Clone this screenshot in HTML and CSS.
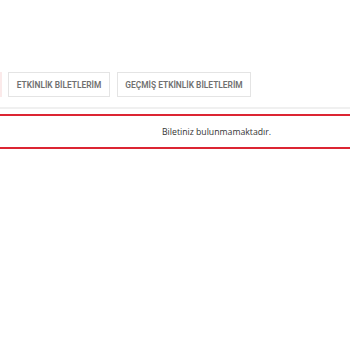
FILE: index.html
```html
<!DOCTYPE html>
<html>
<head>
<meta charset="utf-8">
<link rel="stylesheet" href="styles.css">
</head>
<body>
<div class="page">
  <div class="tabs-area">
    <div class="tabs">
      <div class="tab">ETKİNLİK BİLETLERİM</div>
      <div class="tab">GEÇMİŞ ETKİNLİK BİLETLERİM</div>
    </div>
  </div>
  <div class="divider"></div>
  <div class="notice">
    <p class="notice-text">Biletiniz bulunmamaktadır.</p>
  </div>
</div>
</body>
</html>
```
FILE: styles.css
```css
html, body {
  margin: 0;
  padding: 0;
  background: #fff;
}
.page {
  width: 350px;
  height: 350px;
  padding-top: 72px;
  box-sizing: border-box;
  background: #fff;
}
.tabs-area {
  padding-left: 6px;
  border-left: 2px solid #fbeaea;
}
.tabs {
  display: flex;
  gap: 7px;
}
.tab {
  height: 25px;
  box-sizing: border-box;
  border: 1px solid #e4e4e4;
  display: flex;
  align-items: center;
  justify-content: center;
  font-family: Roboto, "Liberation Sans", sans-serif;
  font-weight: 600;
  font-size: 8.4px;
  color: #707070;
}
.tab:first-child {
  width: 102px;
}
.tab:nth-child(2) {
  width: 134px;
}
.divider {
  margin-top: 10px;
  height: 2px;
  background: #f0f0f0;
}
.notice {
  margin-top: 5px;
  border-top: 2px solid #dc2533;
  border-bottom: 2px solid #dc2533;
  height: 31px;
  display: flex;
  align-items: center;
  padding-left: 162px;
}
.notice-text {
  margin: 0;
  font-family: "Open Sans", "Liberation Sans", sans-serif;
  font-size: 8.7px;
  color: #333;
}
```
